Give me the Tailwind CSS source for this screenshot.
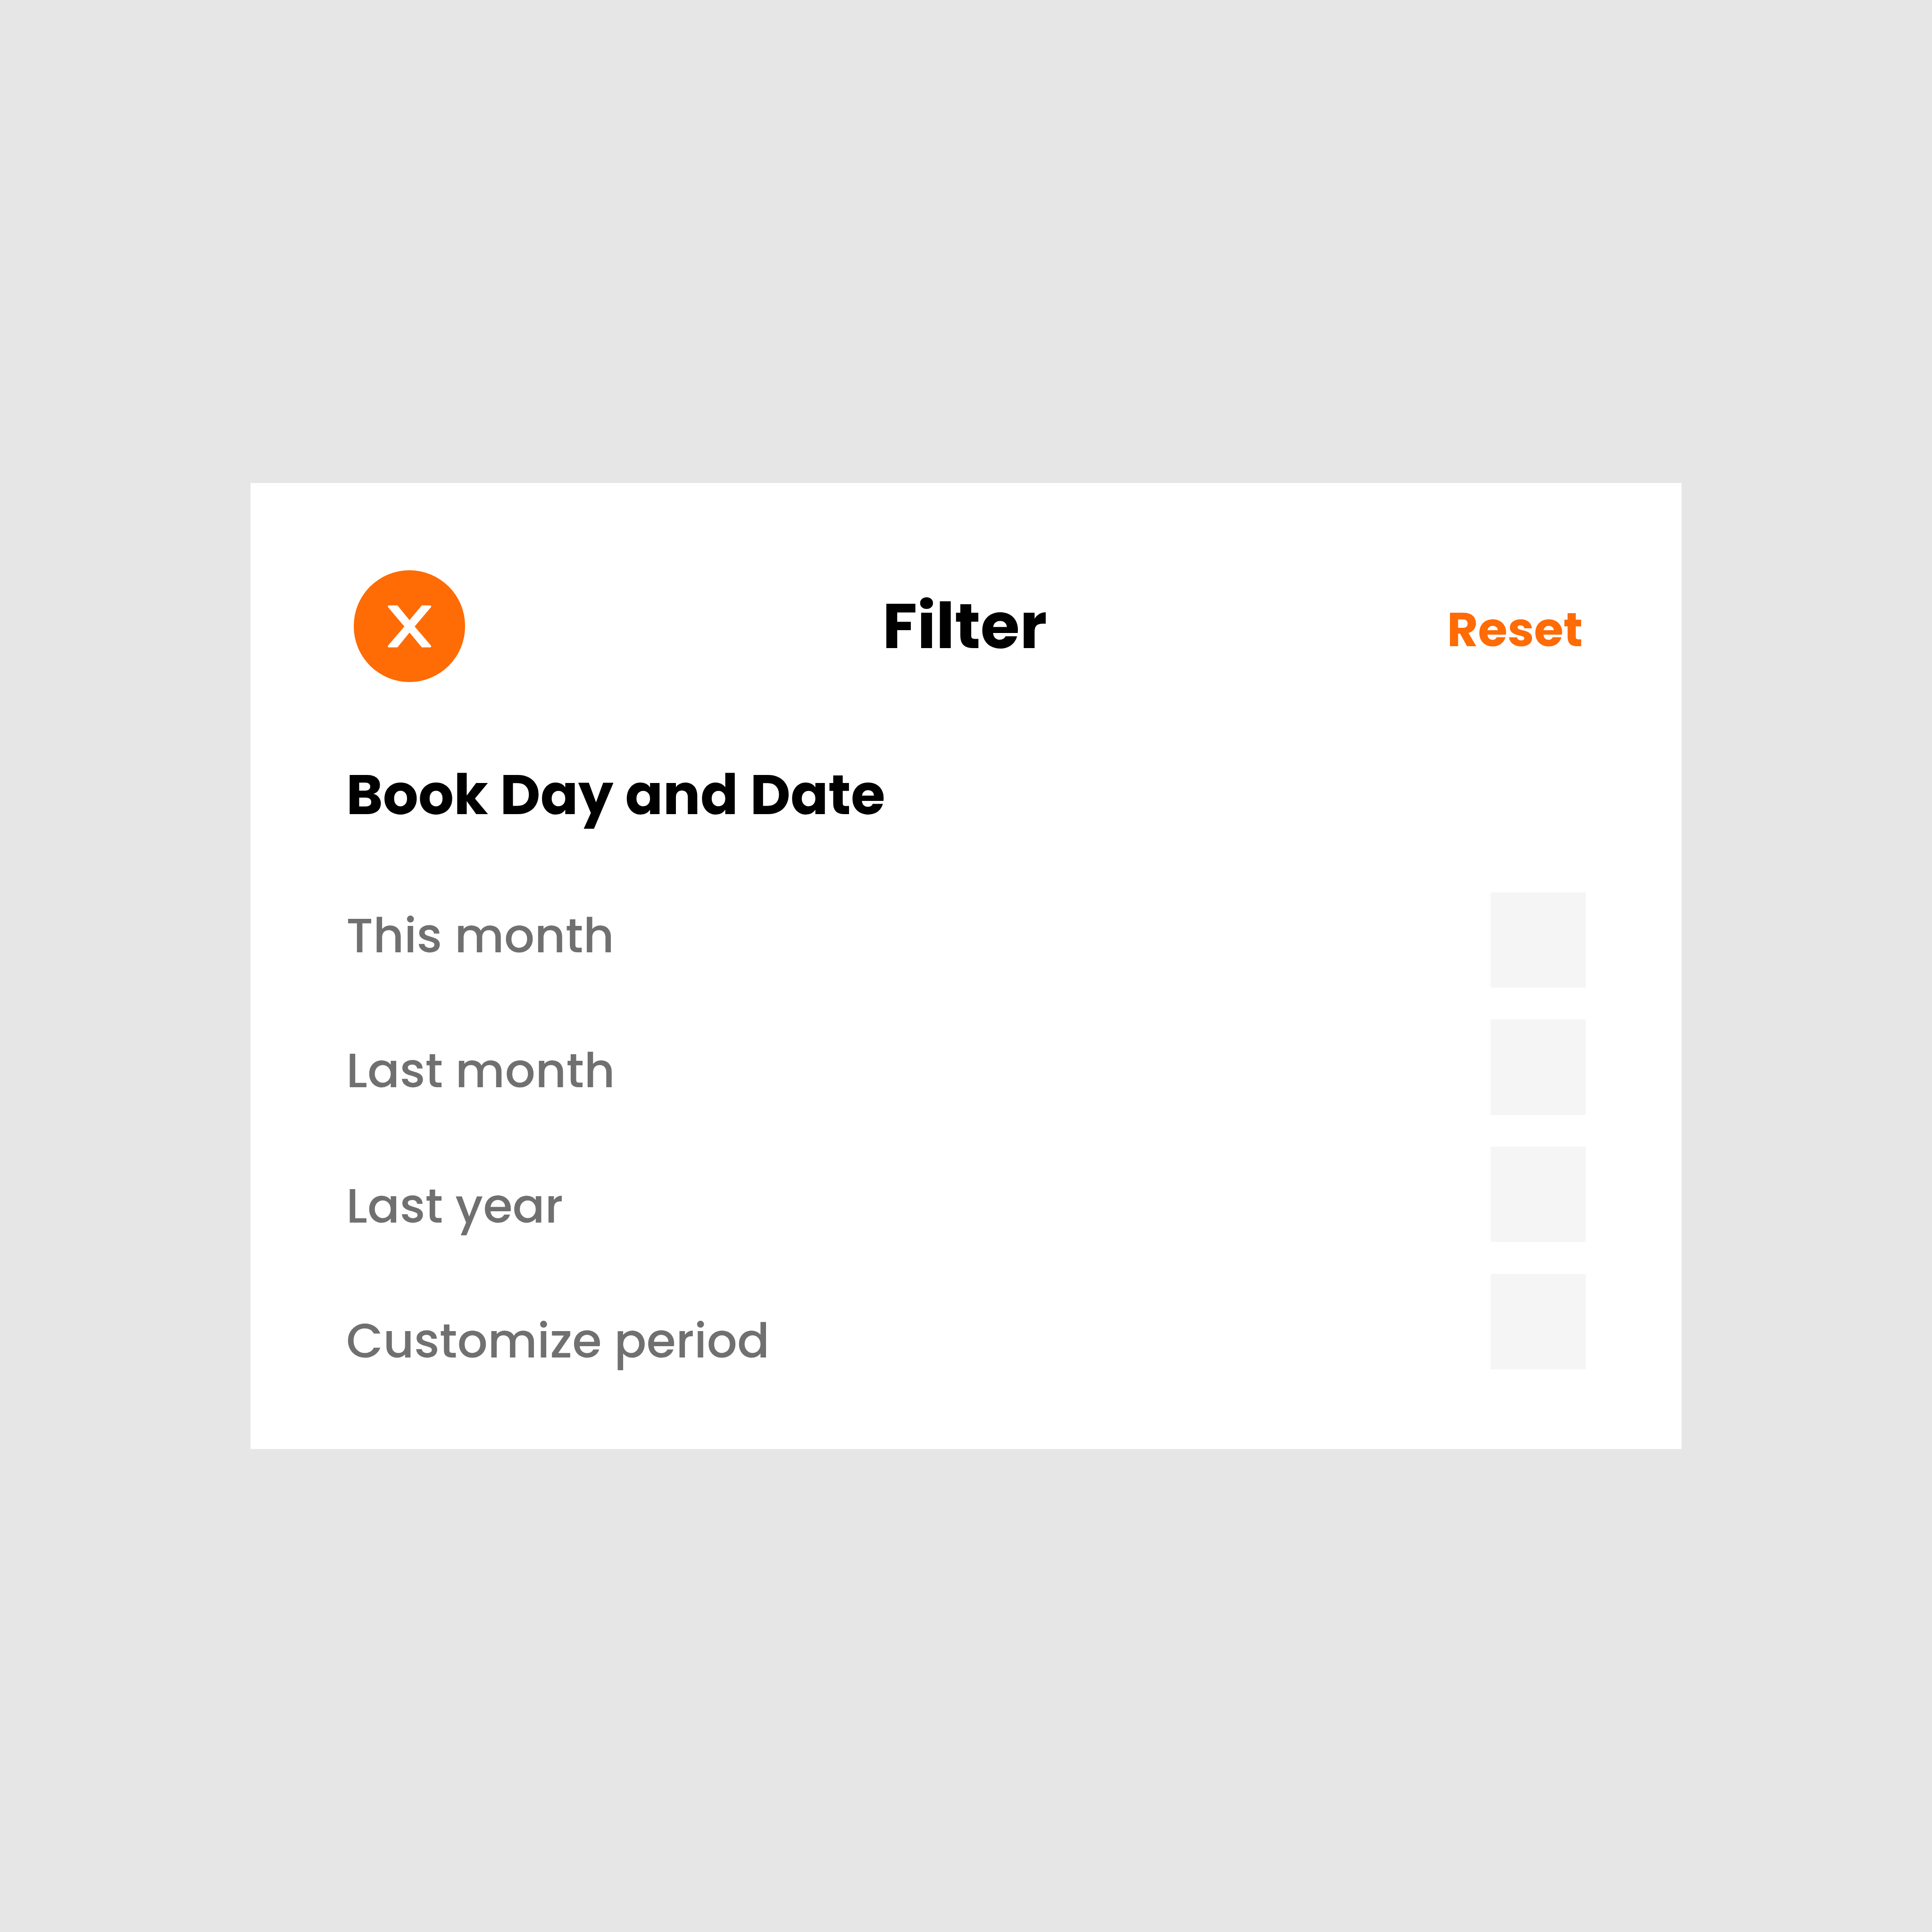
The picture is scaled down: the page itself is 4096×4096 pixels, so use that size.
<!DOCTYPE html>
<html lang="en">
<head>
<meta charset="utf-8">
<title>Filter</title>
<script src="https://cdn.jsdelivr.net/npm/@tailwindcss/browser@4"></script>
</head>
<body class="flex h-[4096px] w-[4096px] items-center justify-center overflow-hidden bg-[#e6e6e6] font-['Poppins','Inter',sans-serif]">
  <main class="h-[2048px] w-[3034px] bg-white pt-[185.3px] pr-[202.6px] pl-[203px]">
    <header class="flex h-[236.4px] items-center pl-[16.1px]">
      <button type="button" aria-label="Close" class="size-[236.4px] shrink-0 rounded-full bg-[#ff6b05]">
        <svg class="block size-full" viewBox="93 105.5 747 747" fill="#fff">
          <path d="M328 341H386L466.500 440L549 341H606Q612 341 612 349L611 352L501 482L611 611L612 614Q612 622 606 622H549L466.500 523L386 622H328Q321 622 321 615L322 611L432 482L322 352L321 348Q321 341 328 341Z"/>
        </svg>
      </button>
      <h1 class="ml-[884.3px] w-[348.7px] whitespace-nowrap text-[134.84px] leading-[1.5] font-bold text-black">Filter</h1>
      <button type="button" class="mt-[14px] ml-[848.2px] whitespace-nowrap text-[101.13px] leading-[1.5] font-bold text-[#ff6b05]">Reset</button>
    </header>
    <h2 class="mt-[151.8px] text-[117.99px] leading-[1.5] font-bold text-black">Book Day and Date</h2>
    <section class="mt-[117.2px] flex items-start justify-between">
      <ul class="flex flex-col gap-[134.84px] pt-[16.2px] text-[101.13px] leading-[1.5] font-medium text-[#707070]">
        <li>This month</li>
        <li>Last month</li>
        <li>Last year</li>
        <li>Customize period</li>
      </ul>
      <div class="flex flex-col gap-[67.42px]">
        <div class="size-[202.26px] bg-[#f5f5f5]"></div>
        <div class="size-[202.26px] bg-[#f5f5f5]"></div>
        <div class="size-[202.26px] bg-[#f5f5f5]"></div>
        <div class="size-[202.26px] bg-[#f5f5f5]"></div>
      </div>
    </section>
  </main>
</body>
</html>
